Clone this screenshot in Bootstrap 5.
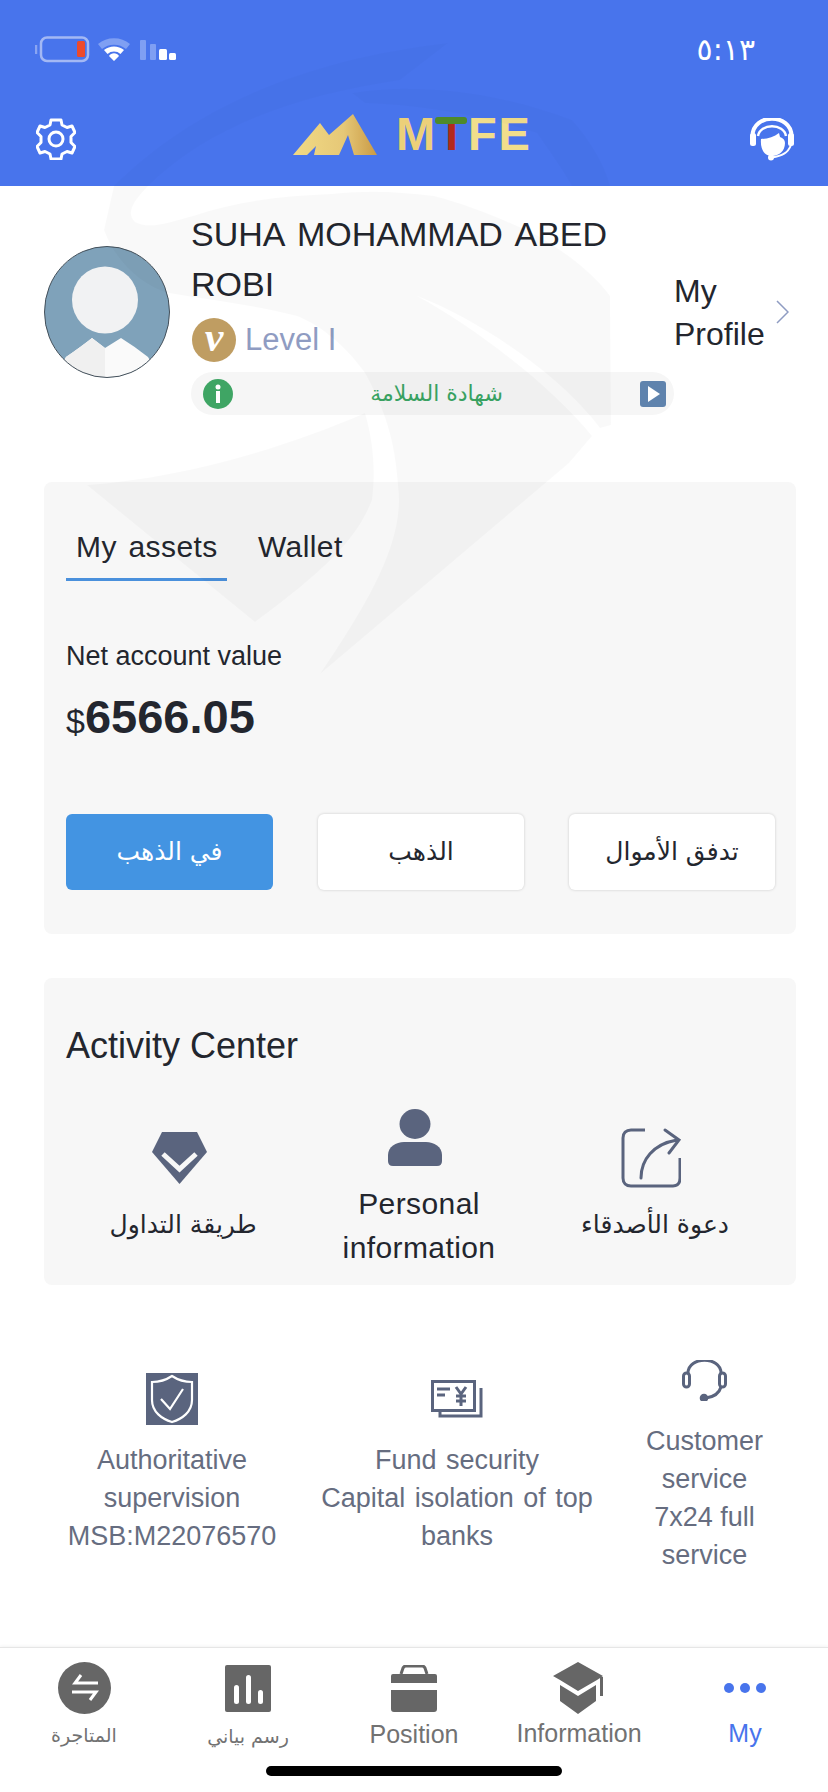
<!DOCTYPE html>
<html lang="en">
<head>
<meta charset="utf-8">
<link href="https://cdn.jsdelivr.net/npm/bootstrap@5.3.0/dist/css/bootstrap.min.css" rel="stylesheet">
<style>
html,body{margin:0;background:#fff}
body{width:828px;height:1792px;overflow:hidden;position:relative;font-family:"Liberation Sans","Noto Sans","DejaVu Sans",sans-serif;color:#23262e}
.wm{position:absolute;left:0;top:0;width:828px;height:800px;z-index:3;pointer-events:none}
.topbar{height:186px;background:#4874ec;color:#fff;padding:36px 33px 0 36px}
.stat{height:28px;line-height:28px}
.stat svg{margin-left:-1px}
.clock{margin-right:40px;font-family:"DejaVu Sans",sans-serif;font-size:30px}
.navrow{margin-top:51px;height:48px}
.brand{margin-left:217px;margin-top:-10px;gap:19px}
.logo-t{font-weight:700;font-size:47px;letter-spacing:2px;color:#f1de8b;line-height:44px;white-space:nowrap}
.logo-t i{font-style:normal;color:#ecd079}
.logo-t b{color:#b3291c;position:relative;display:inline-block}
.logo-t b::before{content:"";position:absolute;left:-2px;right:1px;top:5px;height:7px;border-radius:3px;background:#4e8a2b}
.prof{padding:23px 0 0 44px;height:296px}
.ava{width:126px;height:132px;margin-top:37px;flex:none}
.pname{font-size:34px;line-height:50px;width:440px;word-spacing:4px;color:#23262e}
.lvl{font-size:31px;color:#8f9cc2;height:50px;margin-top:6px;gap:9px}
.vbadge{width:44px;height:44px;margin-left:1px;border-radius:50%;background:#bf9d62;color:#fff;font:italic 700 42px/38px "Liberation Serif",serif;text-align:center}
.pill{width:483px;height:43px;border-radius:22px;background:#f6f6f6;padding:0 8px 0 12px;margin-top:7px;color:#3aa564;font:22px/43px "DejaVu Sans",sans-serif}
.myp{font-size:32px;line-height:43px;width:96px;margin-left:2px;margin-top:61px;flex:none}
.chev{margin:91px 0 0 6px;flex:none}
.panel{margin:0 32px 0 44px;background:#f7f7f7;border-radius:8px}
.assets{height:452px;padding:22px 22px 0}
.tabx{font-size:30px;line-height:36px;padding:25px 10px 13px;color:#23262e;letter-spacing:.4px;word-spacing:3px;white-space:nowrap}
.tabx.on{border-bottom:3px solid #4a90dc;width:161px}
.tabx.off{margin-left:21px}
.netl{font-size:27px;line-height:32px;margin-top:59px}
.netv{font-size:47px;font-weight:700;line-height:52px;margin-top:19px;color:#23262e}
.netv span{font-size:34px;font-weight:400}
.btns{margin-top:67px;width:709px}
.bt{width:206px;height:76px;margin-left:1px;border-radius:6px;font:25px/76px "DejaVu Sans",sans-serif;background:#fff;box-shadow:0 0 3px rgba(0,0,0,.18);text-align:center;color:#23262e}
.bt.blue{background:#4394e2;box-shadow:none;color:#fff;width:207px;margin-left:0}
.acts{margin-top:44px;height:307px;padding:48px 0 0 22px}
.atitle{font-size:36px;line-height:40px}
.acol{width:236px;text-align:center;font-size:30px;line-height:44px;color:#23262e;letter-spacing:.4px}
.acol svg{display:block;margin-left:auto;margin-right:auto;transform:translateX(-4px)}
.arb{font-family:"DejaVu Sans",sans-serif;font-size:25px}
.feats{padding:88px 0 0 67px;color:#666d80;font-size:27px;line-height:38px;text-align:center}
.feats svg{display:block;margin-left:auto;margin-right:auto}
.tabbar{position:absolute;left:0;right:0;top:1647px;height:145px;background:#fff;border-top:1px solid #e6e6e6;box-shadow:0 -1px 3px rgba(0,0,0,.05);color:#727272}
.ti{position:absolute;top:14px;width:160px;text-align:center;font-size:25px;line-height:30px}
.ti svg{display:block;margin:0 auto 4px}
.ti .arb{font-size:19px}
.ti .sm{margin-top:3px;margin-bottom:7px}
.homebar{position:absolute;left:266px;top:118px;width:296px;height:10px;border-radius:5px;background:#000}
</style>
</head>
<body>
<svg class="wm" viewBox="0 0 828 800" aria-hidden="true">
<g fill="#000" fill-opacity=".017">
<path d="M114 186C190 110 300 60 448 43L400 80C300 95 210 125 148 186Z"/>
<path d="M352 93C400 85 480 85 572 120 590 140 605 165 610 186H572C560 165 545 145 537 133 480 115 420 105 365 103Z"/>
</g>
<g fill="#000" fill-opacity=".024">
<path d="M114 186H148C135 200 125 212 135 222 150 230 170 222 193 216 240 200 285 196 331 194 370 190 400 192 434 196 470 205 510 222 538 236 570 255 595 275 610 296L611 425 600 428C560 375 480 320 417 296 480 330 555 390 592 436L569 463 320 674C370 600 405 540 398 486 395 440 385 410 365 373 345 345 320 325 297 316 255 305 210 300 169 293 140 285 115 260 104 230Z"/>
<path d="M87 485C180 478 280 450 365 413 373 440 376 470 372 500 360 530 340 560 255 622Z"/>
</g>
</svg>

<header class="topbar">
 <div class="stat d-flex align-items-center">
  <svg width="145" height="28" viewBox="0 0 145 28"><path d="M1 9v9" stroke="#8aa5f2" stroke-width="2.500"/><rect x="6" y="1.500" width="47" height="23.500" rx="6" fill="none" stroke="#a3b8f4" stroke-width="2.500"/><rect x="42" y="5" width="8" height="16" rx="1.500" fill="#ec4a2d"/><path d="M63 8a25 25 0 0 1 32 0l-4 5a19 19 0 0 0-24 0z" fill="#7f9ff3"/><path d="M69 14a16 16 0 0 1 20 0l-3.500 4a10 10 0 0 0-13 0zM74 20a6 6 0 0 1 10 0l-5 5z" fill="#fff"/><rect x="105" y="4" width="6" height="20" rx="1" fill="#7f9ff3"/><rect x="115" y="8" width="6" height="16" rx="1" fill="#7f9ff3"/><rect x="124" y="13" width="8" height="11" rx="1.500" fill="#fff"/><rect x="134" y="17" width="7" height="7" rx="1.500" fill="#fff"/></svg>
  <span class="clock ms-auto">٥:١٣</span>
 </div>
 <div class="navrow d-flex align-items-center">
  <svg width="40" height="42" viewBox="0 0 40 42" fill="none" stroke="#fff" stroke-width="3" stroke-linejoin="round"><path d="M15 2h10l1 5 5 2.500 5-1.500 3 6.500-4 4v6l4 4-3 6.500-5-1.500-5 2.500-1 5H15l-1-5-5-2.500-5 1.500-3-6.500 4-4v-6l-4-4 3-6.500 5 1.500 5-2.500z"/><circle cx="20" cy="21" r="7"/></svg>
  <div class="brand d-flex align-items-center">
   <svg width="84" height="41" viewBox="0 0 84 41"><defs><linearGradient id="g" x1="0" x2="1"><stop offset="0" stop-color="#f1da85"/><stop offset=".6" stop-color="#e6c877"/><stop offset="1" stop-color="#c99a45"/></linearGradient></defs><path d="M0 41 27 9l9 12L60 0l24 41H61L55 21 46 41H21l2-9-9 9z" fill="url(#g)"/></svg>
   <div class="logo-t"><i>M</i><b>T</b>FE</div>
  </div>
  <svg class="ms-auto" width="45" height="43" viewBox="0 0 45 43"><path d="M2.500 18C2.500-5 41.500-5 41.500 18" fill="none" stroke="#fff" stroke-width="4"/><path d="M8 18C10 5 34 5 36 18" fill="none" stroke="#fff" stroke-width="2.500"/><rect y="15" width="6" height="13" rx="2.500" fill="#fff"/><rect x="38" y="15" width="6" height="13" rx="2.500" fill="#fff"/><path d="M11 21C18 21 24 19 29 15L30 19C33 20 35 22 35 25 35 33 29 38 22 38 15 38 10 32 11 21Z" fill="#fff"/><path d="M41 27C38 35 32 38 22 39.500" fill="none" stroke="#fff" stroke-width="2"/><circle cx="21" cy="39.500" r="3" fill="#fff"/></svg>
 </div>
</header>

<section class="prof d-flex align-items-start">
 <svg class="ava" viewBox="0 0 126 132"><defs><clipPath id="c"><ellipse cx="63" cy="66" rx="62.500" ry="65.500"/></clipPath></defs><g clip-path="url(#c)"><rect width="126" height="132" fill="#7fa2ba"/><ellipse cx="61" cy="54" rx="33" ry="33.500" fill="#f1f2f3"/><path d="M10 132 22 111Q38 100 48 92L61 102 77 92Q90 100 104 111L116 132z" fill="#fafafa"/><path d="M10 132 22 111Q38 100 48 92L61 102V132z" fill="#f0f0f0"/></g><ellipse cx="63" cy="66" rx="62.500" ry="65.500" fill="none" stroke="#44505a" stroke-width="1"/></svg>
 <div style="margin-left:21px;width:481px;flex:none">
  <div class="pname">SUHA MOHAMMAD ABED ROBI</div>
  <div class="lvl d-flex align-items-center"><div class="vbadge">v</div><span>Level I</span></div>
  <div class="pill d-flex align-items-center justify-content-between">
   <svg width="30" height="30" viewBox="0 0 30 30"><circle cx="15" cy="15" r="15" fill="#3fa564"/><rect x="13" y="12" width="4" height="12" fill="#fff"/><circle cx="15" cy="8" r="2.500" fill="#fff"/></svg>
   <span lang="ar" dir="rtl">شهادة السلامة</span>
   <svg width="26" height="26" viewBox="0 0 26 26"><rect width="26" height="26" rx="3" fill="#5f83ad"/><path d="M8 5l12 8-12 8z" fill="#fff"/></svg>
  </div>
 </div>
 <div class="myp">My Profile</div>
 <svg class="chev" width="13" height="24" viewBox="0 0 13 24"><path d="M1 1l11 11L1 23" fill="none" stroke="#8f9cc2" stroke-width="1.500"/></svg>
</section>

<section class="panel assets">
 <div class="d-flex"><div class="tabx on">My assets</div><div class="tabx off">Wallet</div></div>
 <div class="netl">Net account value</div>
 <div class="netv"><span>$</span>6566.05</div>
 <div class="btns d-flex justify-content-between">
  <div class="bt blue" lang="ar" dir="rtl">في الذهب</div>
  <div class="bt" lang="ar" dir="rtl">الذهب</div>
  <div class="bt" lang="ar" dir="rtl">تدفق الأموال</div>
 </div>
</section>

<section class="panel acts">
 <div class="atitle">Activity Center</div>
 <div class="d-flex" style="margin-left:-1px">
  <div class="acol"><svg style="margin-top:66px;margin-bottom:19px" width="55" height="52" viewBox="0 0 55 52"><path d="M10 0h35l10 20-27.500 32L0 20z" fill="#5a647e"/><path d="M11 22l16.500 15L44 22" fill="none" stroke="#f7f7f7" stroke-width="5"/></svg><div class="arb" lang="ar" dir="rtl">طريقة التداول</div></div>
  <div class="acol"><svg style="margin-top:43px;margin-bottom:16px" width="54" height="57" viewBox="0 0 54 57"><ellipse cx="27" cy="15" rx="15.500" ry="15" fill="#5a647e"/><path d="M0 52V46C0 38 8 33 16 33h22c8 0 16 5 16 13v6q0 5-5 5H5q-5 0-5-5z" fill="#5a647e"/></svg><div style="width:170px;margin:0 auto">Personal information</div></div>
  <div class="acol"><svg style="margin-top:62px;margin-bottom:15px" width="60" height="60" viewBox="0 0 60 60" fill="none" stroke="#5a647e" stroke-width="3"><path d="M24 2H10C5 2 2 5 2 10v40c0 5 3 8 8 8h42c5 0 7-3 7-8V30"/><path d="M20 50C20 32 32 16 56 12M44 2l14 10-10 13" stroke-linecap="round"/></svg><div class="arb" lang="ar" dir="rtl">دعوة الأصدقاء</div></div>
 </div>
</section>

<section class="feats d-flex align-items-start">
 <div style="width:210px"><svg style="margin-bottom:16px" width="52" height="52" viewBox="0 0 52 52"><rect width="52" height="52" fill="#5a647e"/><path d="M26 3c6 4 12 6 20 6v18c0 12-10 19-20 22C16 46 6 39 6 27V9c8 0 14-2 20-6z" fill="none" stroke="#fff" stroke-width="2.200"/><path d="M15 26l9 10 13-20" fill="none" stroke="#fff" stroke-width="2.200"/></svg>Authoritative supervision MSB:M22076570</div>
 <div style="width:290px;margin-left:35px;word-spacing:2px"><svg style="margin-top:7px;margin-bottom:23px" width="52" height="38" viewBox="0 0 52 38" fill="none" stroke="#5a647e" stroke-width="3"><rect x="1.500" y="1.500" width="42" height="29"/><path d="M50 8v28H9v-5"/><path d="M6 9h13M6 15h8" /><path d="M25 7l5 7 5-7M30 14v12M25 16h10M25 21h10"/></svg>Fund security<br>Capital isolation of top<br>banks</div>
 <div style="width:125px;margin-left:40px"><svg style="margin-top:-13px;margin-bottom:21px" width="45" height="41" viewBox="0 0 45 41" fill="none" stroke="#5a647e" stroke-width="3"><path d="M6 13C6-4 39-4 39 13"/><rect x="1.500" y="13" width="6" height="14" rx="3"/><rect x="37.500" y="13" width="6" height="14" rx="3"/><path d="M39 27c-2 7-8 10-15 11"/><circle cx="22" cy="38" r="2.800" fill="#5a647e"/></svg>Customer service 7x24 full service</div>
</section>

<nav class="tabbar">
 <div class="ti" style="left:4px"><svg width="53" height="52" viewBox="0 0 53 52"><ellipse cx="26.500" cy="26" rx="26.500" ry="26" fill="#666"/><path d="M40 21H17l6-8M14 30h24l-6 8" fill="none" stroke="#fff" stroke-width="3"/></svg><span class="arb" lang="ar" dir="rtl">المتاجرة</span></div>
 <div class="ti" style="left:168px"><svg class="sm" width="46" height="47" viewBox="0 0 46 47"><rect width="46" height="47" rx="2" fill="#666"/><rect x="9" y="20" width="5" height="19" rx="2.500" fill="#fff"/><rect x="21" y="10" width="5" height="29" rx="2.500" fill="#fff"/><rect x="33" y="25" width="5" height="14" rx="2.500" fill="#fff"/></svg><span class="arb" lang="ar" dir="rtl">رسم بياني</span></div>
 <div class="ti" style="left:334px"><svg class="sm" width="46" height="47" viewBox="0 0 46 47"><path d="M10 9 12 3Q13 1 15 1H31Q33 1 34 3L36 9" fill="none" stroke="#666" stroke-width="3"/><path d="M2 9h42q2 0 2 2v7H0v-7q0-2 2-2zM0 25h46v19q0 3-3 3H3q-3 0-3-3z" fill="#666"/></svg>Position</div>
 <div class="ti" style="left:499px"><svg width="52" height="52" viewBox="0 0 52 52"><path d="M25 0 50 14 44 18 25 29 7 18 0 14zM7 23 25 34 43 23V39L25 52 7 39zM47 15h3V34h-3z" fill="#666"/></svg>Information</div>
 <div class="ti" style="left:665px;color:#4874ec"><svg width="42" height="52" viewBox="0 0 42 52"><circle cx="5" cy="26" r="5" fill="#4874ec"/><circle cx="21" cy="26" r="5" fill="#4874ec"/><circle cx="37" cy="26" r="5" fill="#4874ec"/></svg>My</div>
 <div class="homebar"></div>
</nav>
<script src="https://cdn.jsdelivr.net/npm/bootstrap@5.3.0/dist/js/bootstrap.bundle.min.js"></script>
</body>
</html>
